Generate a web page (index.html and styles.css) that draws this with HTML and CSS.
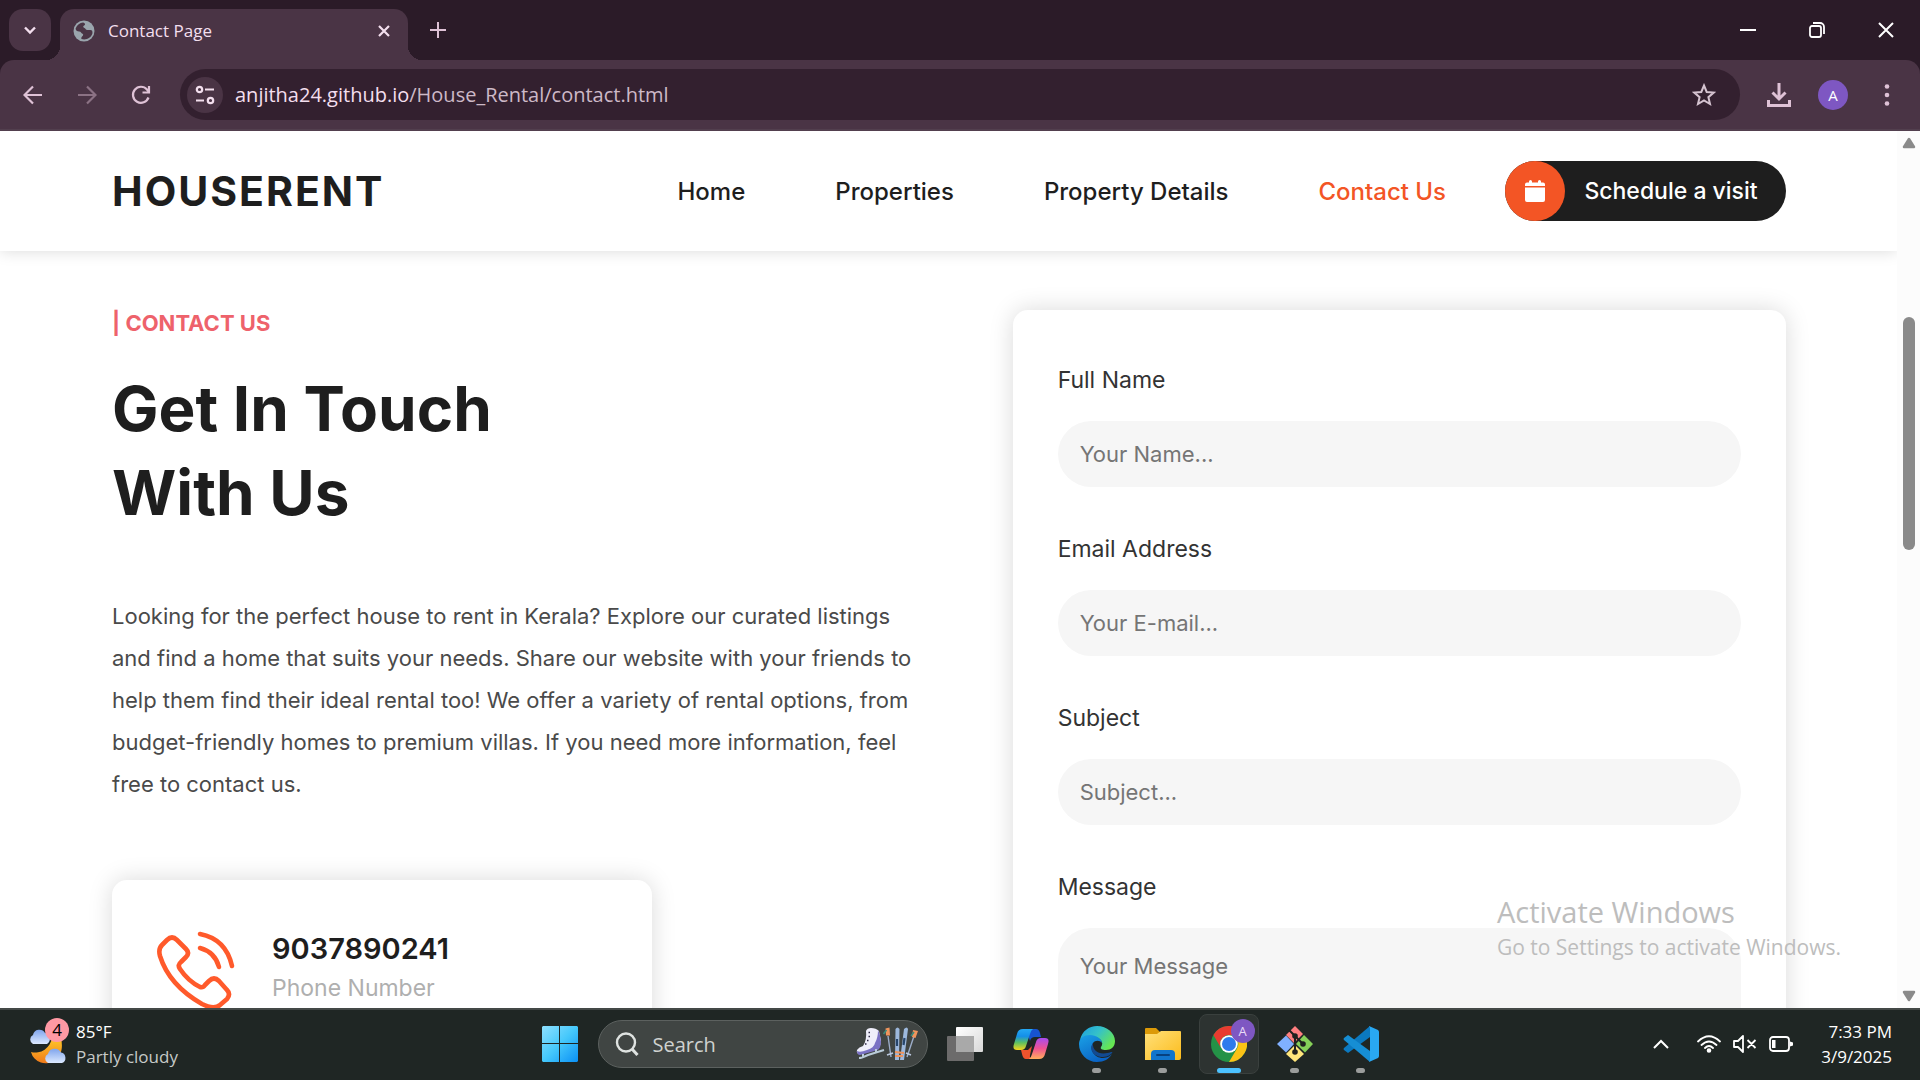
FILE: index.html
```html
<!DOCTYPE html>
<html lang="en">
<head>
<meta charset="utf-8">
<title>Contact Page</title>
<link rel="stylesheet" href="styles.css">
</head>
<body>
<div class="tabstrip">
  <button class="tab-search" aria-label="Search tabs"><svg width="14" height="14" viewBox="0 0 14 14"><path d="M2 4.5l5 5 5-5" fill="none" stroke="#f3dfee" stroke-width="2.4"/></svg></button>
  <div class="tab">
    <svg width="22" height="22" viewBox="0 0 22 22"><circle cx="11" cy="11" r="10.5" fill="#9aa5ad"/><path d="M10 2.5c-3 .2-6 2.4-7.400 6 0 2 1.500 3 3.600 3 2 0 1.800 1.800 3.300 2.200 1 .4.800 1.800 0 2.300-1 .8-1.500 1.900-1 3 4.500 1.500 9.500-1 10.900-5.500.4-2.500-.5-3.500-2-3.500h-3.200c-1.500 0-1.500-1.500-2.700-2-1.500-.5-1.700-2-.4-2.500 1.400-.5 1.400-2.300-1.100-3z" fill="#4a3445"/></svg>
    <span class="tab-title">Contact Page</span>
    <button class="plain" aria-label="Close tab"><svg width="14" height="14" viewBox="0 0 14 14"><path d="M2 2l10 10M12 2L2 12" stroke="#f3dfee" stroke-width="2.200"/></svg></button>
  </div>
  <button class="plain new-tab" aria-label="New tab"><svg width="16" height="16" viewBox="0 0 16 16"><path d="M8 0v16M0 8h16" stroke="#dfc2d6" stroke-width="2"/></svg></button>
  <div class="window-controls">
    <button class="plain" aria-label="Minimize"><svg width="16" height="16" viewBox="0 0 16 16"><path d="M0 8h16" stroke="#fff" stroke-width="2"/></svg></button>
    <button class="plain" aria-label="Restore"><svg width="16" height="16" viewBox="0 0 16 16" fill="none" stroke="#fff" stroke-width="1.800"><rect x="1" y="4" width="11" height="11" rx="2"/><path d="M4 1h7a4 4 0 0 1 4 4v7"/></svg></button>
    <button class="plain" aria-label="Close"><svg width="16" height="16" viewBox="0 0 16 16"><path d="M1 1l14 14M15 1L1 15" stroke="#fff" stroke-width="2"/></svg></button>
  </div>
</div>

<div class="toolbar">
  <button class="plain tool" aria-label="Back"><svg width="20" height="20" viewBox="0 0 20 20" fill="none" stroke="#dfc2d6" stroke-width="2.200"><path d="M19 10H2.500M10 1.500L1.500 10l8.500 8.500"/></svg></button>
  <button class="plain tool" aria-label="Forward"><svg width="20" height="20" viewBox="0 0 20 20" fill="none" stroke="#8b7284" stroke-width="2.200"><path d="M1 10h16.500M10 1.500l8.500 8.500-8.500 8.500"/></svg></button>
  <button class="plain tool" aria-label="Reload"><svg width="20" height="20" viewBox="0 0 20 20" fill="none" stroke="#dfc2d6" stroke-width="2.200"><path d="M17.500 12.500A8 8 0 1 1 16 4.500L17.500 6.500"/><path d="M18 1v6.500h-6.500"/></svg></button>
  <div class="omnibox">
    <button class="site-info" aria-label="Site information"><svg width="20" height="20" viewBox="0 0 20 20" fill="none" stroke="#f3dfee" stroke-width="2.200"><circle cx="4.500" cy="4.500" r="2.700"/><path d="M10 4.500h9M1 15.500h8"/><circle cx="15.500" cy="15.500" r="2.700"/></svg></button>
    <span class="url">anjitha24.github.io<span class="url-path">/House_Rental/contact.html</span></span>
    <button class="plain" aria-label="Bookmark"><svg width="24" height="24" viewBox="0 0 24 24"><path d="M12 2.500l2.700 6.500 7 .6-5.300 4.600 1.600 6.800-6-3.600-6 3.600 1.600-6.800-5.300-4.600 7-.6z" fill="none" stroke="#d5c3d0" stroke-width="2"/></svg></button>
  </div>
  <button class="plain tool" aria-label="Downloads"><svg width="24" height="24" viewBox="0 0 24 24" fill="none" stroke="#dfc2d6" stroke-width="3"><path d="M12 0v15M5.500 9.500L12 16l6.500-6.500M1.500 17v5.500h21V17"/></svg></button>
  <button class="plain tool" aria-label="Profile"><span class="avatar">A</span></button>
  <button class="plain tool" aria-label="Menu"><svg width="6" height="22" viewBox="0 0 6 22" fill="#dfc2d6"><circle cx="3" cy="2.500" r="2.300"/><circle cx="3" cy="11" r="2.300"/><circle cx="3" cy="19.500" r="2.300"/></svg></button>
</div>

<div class="viewport">
  <div class="site">
    <header class="site-header">
      <a class="logo" href="#">HOUSERENT</a>
      <nav class="nav">
        <a href="#">Home</a>
        <a href="#">Properties</a>
        <a href="#">Property Details</a>
        <a class="active" href="#">Contact Us</a>
      </nav>
      <a class="visit" href="#"><span class="visit-icon"><svg width="20" height="22" viewBox="0 0 20 22" fill="#fff"><path d="M0 6V4.500Q0 2.500 2 2.500h2V1.500a1.500 1.500 0 0 1 3 0v1h6v-1a1.500 1.500 0 0 1 3 0v1h2q2 0 2 2V6zM0 7.500h20V20q0 2-2 2H2q-2 0-2-2z"/></svg></span><span class="visit-text">Schedule a visit</span></a>
    </header>
    <main class="contact">
      <section class="intro">
        <h6 class="eyebrow">| CONTACT US</h6>
        <h2 class="title">Get In Touch<br>With Us</h2>
        <p class="lead">Looking for the perfect house to rent in Kerala? Explore our curated listings<br>and find a home that suits your needs. Share our website with your friends to<br>help them find their ideal rental too! We offer a variety of rental options, from<br>budget-friendly homes to premium villas. If you need more information, feel<br>free to contact us.</p>
        <div class="phone-card">
          <svg class="phone-icon" width="78" height="80" viewBox="0 0 78 80" fill="none" stroke="#ff5a2b" stroke-width="4.600" stroke-linecap="round" stroke-linejoin="round"><path d="M10 9Q15 4 20 9L29 18Q33 22 29 26L24 31Q20 34 23 38Q31 50 43 56Q46 57 48 54L52 50Q57 45 62 50L70 59Q74 63 70 68L63 74Q57 79 45 73Q12 54 3 25Q1 18 5 14Z"/><path d="M43 3Q69 8 75 35M43 17Q58 21 62 36"/></svg>
          <div>
            <h6 class="phone-number">9037890241</h6>
            <span class="phone-label">Phone Number</span>
          </div>
        </div>
      </section>
      <form class="form-card">
        <div class="field"><label for="name">Full Name</label><input id="name" type="text" placeholder="Your Name..."></div>
        <div class="field"><label for="email">Email Address</label><input id="email" type="email" placeholder="Your E-mail..."></div>
        <div class="field"><label for="subject">Subject</label><input id="subject" type="text" placeholder="Subject..."></div>
        <div class="field"><label for="message">Message</label><textarea id="message" placeholder="Your Message"></textarea></div>
      </form>
    </main>
  </div>
  <div class="scrollbar">
    <svg width="14" height="12" viewBox="0 0 14 12"><path d="M7 2L12 10H2z" fill="#8a8a8a" stroke="#8a8a8a" stroke-width="2.500" stroke-linejoin="round"/></svg>
    <span class="space-before"></span><span class="thumb"></span><span class="space-after"></span>
    <svg width="14" height="12" viewBox="0 0 14 12"><path d="M7 10L2 2h10z" fill="#8a8a8a" stroke="#8a8a8a" stroke-width="2.500" stroke-linejoin="round"/></svg>
  </div>
  <div class="watermark"><p class="watermark-title">Activate Windows</p><p>Go to Settings to activate Windows.</p></div>
</div>

<footer class="taskbar">
  <button class="plain weather">
    <span class="weather-icon">
      <svg width="40" height="44" viewBox="0 0 40 44"><defs><linearGradient id="cl" x2="0" y2="1"><stop stop-color="#7fa4ec"/><stop offset="1" stop-color="#dce9ff"/></linearGradient><linearGradient id="mo" x2="0" y2="1"><stop stop-color="#ffc928"/><stop offset="1" stop-color="#f07a1a"/></linearGradient></defs><path d="M24 16a17 17 0 0 1-21 14 15 15 0 0 0 24 8c7-5 8-13 6-22z" fill="url(#mo)"/><path d="M5 22a5 5 0 0 1 0-9 6.500 6.500 0 0 1 12-2 6 6 0 0 1 2 11z" fill="url(#cl)"/><path d="M20 41a5 5 0 0 1 0-9 7 7 0 0 1 13-1.500A5.500 5.500 0 0 1 34 41z" fill="url(#cl)"/></svg>
      <span class="badge">4</span>
    </span>
    <span class="weather-text"><span>85°F</span><span class="muted">Partly cloudy</span></span>
  </button>

  <div class="apps">
    <button class="plain app" aria-label="Start"><svg width="36" height="36" viewBox="0 0 36 36"><defs><linearGradient id="win" x2="1" y2="1"><stop stop-color="#8ee0ff"/><stop offset=".5" stop-color="#45c8fb"/><stop offset="1" stop-color="#0a90f5"/></linearGradient></defs><path d="M1 0h16v17H0V1zM18 0h17l1 1v16H18zM0 18h17v18H1l-1-1zM18 18h18v17l-1 1H18z" fill="url(#win)"/></svg></button>
    <div class="search">
      <svg width="24" height="24" viewBox="0 0 24 24" fill="none" stroke="#dfe3e1"><circle cx="11" cy="10.500" r="9" stroke-width="2.400"/><path d="M17 17l5.500 6" stroke-width="3"/></svg>
      <input type="search" aria-label="Search" placeholder="Search">
      <svg width="62" height="34" viewBox="0 0 62 34"><path d="M10 4q1-3 5-3 5 0 8 3 1 6 2 9 0 6-3 9L4 27q-4 0-3-4 2-3 6-4 4-6 3-15z" fill="#eeeefa"/><path d="M22 3q3 6 3 12 0 5-3 8L4 28q-3 0-3-4 3 2 10-1 7-2 8-7 3-5 3-13z" fill="#7a72c4"/><path d="M12.500 5.500h1.500M12.500 9.500h1.500M11 13.500h1.500M9 17h1.500" stroke="#2d2845" stroke-width="1.600"/><path d="M3 31q3 0 9-3l16-5M7 27v3M20 22v3" fill="none" stroke="#b9cbd8" stroke-width="2"/><path d="M32 9l3 21M58 9l-7 21" stroke="#9cadc9" stroke-width="1.400"/><path d="M29.500 1.500l4-1 .5 8h-4zM57 3l5 1-2.500 7-3.500-1z" fill="#f0945c"/><path d="M27.500 7l3-4M55 9l3-4" stroke="#388a7b" stroke-width="1.600"/><path d="M31 28l6-2M50 26l5 2" stroke="#bac7de" stroke-width="1.600"/><path d="M39.500 2q2-3 4 0l-.5 31h-4zM48 2q3-3 4 0l-4 31h-4z" fill="#9db8dc"/><path d="M41 12v7M48.500 11l-1 7" stroke="#27466c" stroke-width="2.200"/><path d="M39 25l9 1M39 29h8" stroke="#f0945c" stroke-width="1.800"/></svg>
    </div>
    <button class="plain app" aria-label="Task view"><svg width="36" height="34" viewBox="0 0 36 34"><defs><linearGradient id="tv" x2="1" y2="1"><stop stop-color="#fff"/><stop offset="1" stop-color="#d8d8d8"/></linearGradient></defs><rect x="9" width="27" height="25" rx="1" fill="url(#tv)"/><rect y="9" width="27" height="25" rx="1" fill="#6c6b6b"/><path d="M9 9h18v16H9z" fill="#a9a9a9"/></svg></button>
    <button class="plain app" aria-label="Copilot"><svg width="36" height="32" viewBox="0 0 36 32"><defs><linearGradient id="c1" x2="0" y2="1"><stop stop-color="#24a8f4"/><stop offset=".35" stop-color="#148fe8"/><stop offset=".65" stop-color="#5cc060"/><stop offset="1" stop-color="#f6d51c"/></linearGradient><linearGradient id="c2" x2="0" y2="1"><stop stop-color="#a84bf0"/><stop offset=".5" stop-color="#ef5292"/><stop offset="1" stop-color="#ffae5c"/></linearGradient></defs><path d="M13 1h10q3 0 4 4l1 4h-6q-4 0-5 4z" fill="#1753d1"/><path d="M8 22h7l4-4-2 9q-1 4 4 4h-8q-3 0-4-5z" fill="#f0532d"/><path d="M10 1h10q-2 1-3 5l-4 12q-1 4-5 4H4q-5 0-3-6L4 6q1-5 6-5z" fill="url(#c1)"/><path d="M26 31H16q2-1 3-5l4-12q1-4 5-4h4q5 0 3 6l-3 10q-1 5-6 5z" fill="url(#c2)"/></svg></button>
    <button class="plain app running" aria-label="Edge"><svg width="36" height="36" viewBox="0 0 36 36"><defs><linearGradient id="e1" x2="1" y2=".6"><stop stop-color="#1b9de2"/><stop offset=".5" stop-color="#35c1c9"/><stop offset="1" stop-color="#66e652"/></linearGradient><linearGradient id="e2" x2=".6" y2="1"><stop stop-color="#1aa1e6"/><stop offset="1" stop-color="#0a62c4"/></linearGradient></defs><path d="M1 14C3 5 10 0 18 0c10 0 18 7 18 15 0 6-4 9-9 9-4 0-6-1-5-3 4-5-2-11-9-10C8 11 3 12 1 14z" fill="url(#e1)"/><path d="M0 18c0-6 5-9 11-9 6 0 12 4 12 8-2-3-7-3-9 0-4 6 1 15 10 15 5 0 8-3 9-4-3 5-8 8-15 8C8 36 0 28 0 18z" fill="url(#e2)"/><path d="M14 17c-5 8 2 14 10 14 5 0 8-3 9-4 1-1 0-1-1-1-11 4-19-1-18-9z" fill="#124a91"/></svg></button>
    <button class="plain app running" aria-label="File Explorer"><svg width="36" height="34" viewBox="0 0 36 34"><defs><linearGradient id="fo" x2="1" y2="1"><stop stop-color="#ffe07a"/><stop offset="1" stop-color="#fcbc1c"/></linearGradient></defs><path d="M0 2q0-1 1-1h10l4 4h20v6H0z" fill="#dc9a08"/><path d="M0 7h12l4-3h19q1 0 1 1v26q0 2-2 2H0z" fill="url(#fo)"/><path d="M6 33v-6q0-4 4-4h16q4 0 4 4v6z" fill="#1175cc"/><path d="M12 28h12" stroke="#07417f" stroke-width="2" stroke-linecap="round"/></svg></button>
    <button class="plain app current" aria-label="Chrome">
      <svg width="36" height="36" viewBox="0 0 36 36"><circle cx="18" cy="18" r="18" fill="#249247"/><path d="M2.400 9A18 18 0 0 1 33.600 9H18a9 9 0 0 0-8 13z" fill="#e83b30"/><path d="M18 9h15.600A18 18 0 0 1 18 36l8-13.500A9 9 0 0 0 18 9z" fill="#fcc216"/><circle cx="18" cy="18" r="8.800" fill="#fff"/><circle cx="18" cy="18" r="7" fill="#2c7bed"/></svg>
      <span class="profile-badge">A</span>
    </button>
    <button class="plain app running" aria-label="Git"><svg width="36" height="36" viewBox="0 0 36 36"><path d="M18 0l8 8-9 9-8-8z" fill="#ff7f80"/><path d="M9 9.500l8 8.500-8 8.500L0 18z" fill="#80b0ff"/><path d="M27 9l9 9-8 8.500-9-8.500z" fill="#86d059"/><path d="M18 19l9 9-9 8-9-8z" fill="#ffe67c"/><path d="M12 4l6 6v16M18 10l8 8" fill="none" stroke="#20221f" stroke-width="2"/><circle cx="18" cy="10" r="2.800" fill="#20221f"/><circle cx="26" cy="18" r="2.800" fill="#20221f"/><circle cx="18" cy="26" r="2.800" fill="#20221f"/></svg></button>
    <button class="plain app running" aria-label="Visual Studio Code"><svg width="36" height="36" viewBox="0 0 36 36"><path d="M27 0v11L5 27l-4-3q-1-1 0-2z" fill="#0b79c0"/><path d="M27 36V25L5 9l-4 3q-1 1 0 2z" fill="#168ed4"/><path d="M26 0l9 4q1 1 1 2v24q0 1-1 2l-9 4q1-1 1-2V2z" fill="#29a8f2"/></svg></button>
  </div>

  <div class="tray">
    <button class="plain" aria-label="Show hidden icons"><svg width="16" height="10" viewBox="0 0 16 10"><path d="M1 9l7-7 7 7" fill="none" stroke="#fff" stroke-width="2"/></svg></button>
    <button class="plain status" aria-label="Network, sound and battery">
      <svg width="24" height="18" viewBox="0 0 24 18" fill="none" stroke="#fff" stroke-width="1.800" stroke-linecap="round"><path d="M1 6.500Q12-4 23 6.500M4.500 10q7.500-7 15 0M8 13q4-4 8 0"/><circle cx="12" cy="15.500" r="1.400" fill="#fff"/></svg>
      <svg width="24" height="18" viewBox="0 0 24 18" fill="none" stroke="#fff" stroke-width="1.800" stroke-linejoin="round"><path d="M1 6h4l5-5v16l-5-5H1zM14.500 5l8 8M22.500 5l-8 8"/></svg>
      <svg width="24" height="16" viewBox="0 0 24 16"><rect x="1" y="1" width="19" height="14" rx="3" fill="none" stroke="#fff" stroke-width="1.800"/><path d="M3 4h3.500v8H3zM21 5.500l3 1v3l-3 1z" fill="#fff"/></svg>
    </button>
    <button class="plain clock"><span>7:33 PM</span><span>3/9/2025</span></button>
  </div>
</footer>
</body>
</html>
```

FILE: styles.css
```css
:root {
  --frame: #2b1b28;
  --toolbar: #4a3445;
  --ink: #1e1e1e;
  --accent: #f35525;
  --ui: "Open Sans", "Noto Sans", sans-serif;
  --web: Inter, "Open Sans", sans-serif;
}

* {
  box-sizing: border-box;
}

body {
  margin: 0;
  height: 100vh;
  display: flex;
  flex-direction: column;
  overflow: hidden;
  background: var(--frame);
  font-family: var(--ui);
}

h2, h6, p {
  margin: 0;
}

svg {
  display: block;
  flex: none;
}

a {
  text-decoration: none;
}

button {
  font-family: inherit;
  padding: 0;
  border: 0;
}

.plain {
  display: flex;
  align-items: center;
  justify-content: center;
  background: none;
}

/* Tab strip */
.tabstrip {
  display: flex;
  align-items: center;
  height: 60px;
  padding-left: 9px;
}

.tab-search {
  display: flex;
  align-items: center;
  justify-content: center;
  width: 42px;
  height: 42px;
  border-radius: 14px;
  background: var(--toolbar);
}

.tab {
  position: relative;
  display: flex;
  align-items: center;
  align-self: flex-end;
  gap: 13px;
  width: 348px;
  height: 51px;
  margin-left: 9px;
  padding: 0 17px 8px 13px;
  border-radius: 14px 14px 0 0;
  background: var(--toolbar);
}

.tab::before,
.tab::after {
  content: "";
  position: absolute;
  bottom: 0;
  width: 14px;
  height: 14px;
}

.tab::before {
  right: 100%;
  background: radial-gradient(circle at 0 0, transparent 14px, var(--toolbar) 14px);
}

.tab::after {
  left: 100%;
  background: radial-gradient(circle at 100% 0, transparent 14px, var(--toolbar) 14px);
}

.tab-title {
  flex: 1;
  text-align: left;
  color: #f3dfee;
  font-size: 17px;
}

.new-tab {
  margin-left: 22px;
}

.window-controls {
  display: flex;
  margin-left: auto;
}

.window-controls .plain {
  width: 69px;
  height: 58px;
}

/* Address bar row */
.toolbar {
  display: flex;
  align-items: center;
  height: 71px;
  padding: 0 6px;
  border-radius: 14px 14px 0 0;
  border-bottom: 2px solid #523f4e;
  background: var(--toolbar);
}

.tool {
  width: 54px;
  height: 51px;
}

.omnibox {
  flex: 1;
  display: flex;
  align-items: center;
  gap: 12px;
  height: 51px;
  margin: 0 12px;
  padding: 0 24px 0 7px;
  border-radius: 26px;
  background: #33202f;
}

.site-info {
  display: flex;
  align-items: center;
  justify-content: center;
  width: 36px;
  height: 36px;
  border-radius: 50%;
  background: var(--toolbar);
}

.url {
  flex: 1;
  color: #f3dfee;
  font-size: 20px;
}

.url-path {
  color: #cdb9c7;
}

.avatar {
  width: 30px;
  height: 30px;
  border-radius: 50%;
  background: #7e57c2;
  color: #fff;
  font-size: 15px;
  line-height: 30px;
}

/* Web page */
.viewport {
  position: relative;
  flex: 1;
  min-height: 0;
  display: flex;
  overflow: hidden;
  background: #fff;
}

.site {
  flex: 1;
  min-width: 0;
  overflow: hidden;
  font-family: var(--web);
}

.site-header {
  display: flex;
  align-items: center;
  height: 120px;
  padding: 0 111px 0 112px;
  box-shadow: 0 0 15px rgba(0, 0, 0, 0.15);
}

.logo {
  color: var(--ink);
  font-size: 41px;
  font-weight: 700;
  letter-spacing: 2px;
}

.nav {
  display: flex;
  gap: 90px;
  margin-left: auto;
  font-size: 24px;
  font-weight: 500;
}

.nav a {
  color: var(--ink);
}

.nav .active {
  color: var(--accent);
}

.visit {
  display: flex;
  align-items: center;
  width: 281px;
  height: 60px;
  margin-left: 59px;
  border-radius: 30px;
  background: var(--ink);
  color: #fff;
  font-size: 23px;
  font-weight: 500;
}

.visit-icon {
  display: flex;
  align-items: center;
  justify-content: center;
  width: 60px;
  height: 60px;
  border-radius: 50%;
  background: var(--accent);
}

.visit-text {
  flex: 1;
  padding-right: 9px;
  text-align: center;
}

.contact {
  display: grid;
  grid-template-columns: minmax(0, 1fr) 46.2%;
  gap: 90px;
  padding: 59px 111px 59px 112px;
}

.eyebrow {
  color: #ee626b;
  font-size: 22px;
  font-weight: 700;
  line-height: 26px;
}

.title {
  margin-top: 31px;
  color: var(--ink);
  font-size: 62px;
  font-weight: 700;
  line-height: 84px;
}

.lead {
  margin-top: 60px;
  color: #4a4a4a;
  font-size: 22px;
  line-height: 42px;
  white-space: nowrap;
}

.phone-card {
  display: flex;
  gap: 37px;
  width: 540px;
  margin-top: 75px;
  padding: 51px 45px;
  border-radius: 15px;
  box-shadow: 0 0 25px rgba(0, 0, 0, 0.15);
}

.phone-number {
  color: var(--ink);
  font-size: 29px;
  font-weight: 600;
  line-height: 36px;
}

.phone-label {
  color: #afafaf;
  font-size: 23px;
  line-height: 42px;
}

.form-card {
  display: flex;
  flex-direction: column;
  gap: 47px;
  padding: 55px 45px;
  border-radius: 15px;
  box-shadow: 0 0 25px rgba(0, 0, 0, 0.15);
}

.field {
  display: flex;
  flex-direction: column;
  gap: 26px;
}

.field label {
  color: #333;
  font-size: 23px;
  line-height: 30px;
}

.field input,
.field textarea {
  width: 100%;
  height: 66px;
  padding: 0 22px;
  border: 0;
  border-radius: 33px;
  background: #f6f6f6;
  font-family: inherit;
  font-size: 22px;
}

.field textarea {
  height: 225px;
  padding-top: 25px;
  resize: none;
}

.field ::placeholder {
  color: #757575;
}

.scrollbar {
  display: flex;
  flex-direction: column;
  align-items: center;
  width: 23px;
  padding: 6px 0;
  background: #fcfcfc;
}

.space-before {
  flex: 168;
}

.thumb {
  flex: 233;
  width: 12px;
  border-radius: 6px;
  background: #8a8a8a;
}

.space-after {
  flex: 439;
}

.watermark {
  position: absolute;
  right: 79px;
  bottom: 44px;
  color: #bdbdbd;
  font-size: 21px;
  line-height: 34px;
}

.watermark-title {
  font-size: 29px;
  line-height: 36px;
}

/* Taskbar */
.taskbar {
  display: grid;
  grid-template-columns: 1fr auto 1fr;
  align-items: center;
  height: 72px;
  padding-bottom: 2px;
  border-top: 2px solid #444947;
  background: #1f2624;
  color: #fff;
}

.weather {
  justify-self: start;
  gap: 8px;
  padding-left: 28px;
  color: #fff;
}

.weather-icon {
  position: relative;
}

.badge {
  position: absolute;
  top: -4px;
  right: -1px;
  width: 24px;
  height: 24px;
  border-radius: 50%;
  background: #ff99a4;
  color: #000;
  font-size: 17px;
  line-height: 24px;
}

.weather-text,
.clock {
  display: flex;
  flex-direction: column;
  font-size: 17px;
  line-height: 25px;
}

.weather-text {
  align-items: flex-start;
}

.muted {
  color: #c6cac8;
}

.apps {
  display: flex;
  align-items: center;
}

.app {
  position: relative;
  width: 66px;
  height: 60px;
}

.running::after,
.current::after {
  content: "";
  position: absolute;
  bottom: 1px;
  width: 9px;
  height: 5px;
  border-radius: 3px;
  background: #9b9d9c;
}

.current::before {
  content: "";
  position: absolute;
  inset: 0 3px;
  border: 1px solid #3a403e;
  border-radius: 8px;
  background: #2d3331;
}

.current svg {
  position: relative;
}

.current::after {
  width: 24px;
  background: #4cc2ff;
}

.profile-badge {
  position: absolute;
  top: 5px;
  right: 7px;
  width: 24px;
  height: 24px;
  border-radius: 50%;
  background: #7e57c2;
  color: #e8dcf8;
  font-size: 13px;
  line-height: 24px;
}

.search {
  display: flex;
  align-items: center;
  gap: 14px;
  width: 330px;
  height: 48px;
  margin: 0 4px 0 5px;
  padding: 0 9px 0 16px;
  border: 1px solid #5c615f;
  border-radius: 24px;
  background: #404543;
}

.search input {
  flex: 1;
  min-width: 0;
  padding: 0;
  border: 0;
  background: none;
  font-family: inherit;
  font-size: 20px;
}

.search input::placeholder {
  color: #cfd2d0;
}

.tray {
  display: flex;
  align-items: center;
  justify-self: end;
  gap: 28px;
  padding-right: 28px;
}

.status {
  gap: 12px;
}

.clock {
  align-items: flex-end;
  color: #fff;
}
```
